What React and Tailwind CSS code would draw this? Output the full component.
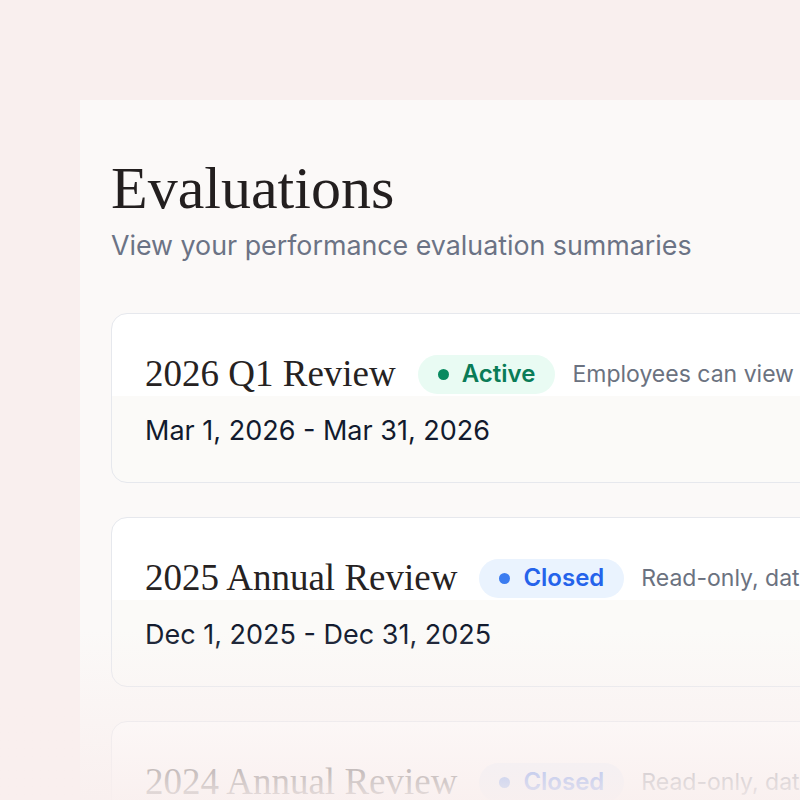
import React from 'react'

const evaluations = [
  {
    name: '2026 Q1 Review',
    status: 'Active',
    note: 'Employees can view results',
    range: 'Mar 1, 2026 - Mar 31, 2026',
  },
  {
    name: '2025 Annual Review',
    status: 'Closed',
    note: 'Read-only, data archived',
    range: 'Dec 1, 2025 - Dec 31, 2025',
  },
  {
    name: '2024 Annual Review',
    status: 'Closed',
    note: 'Read-only, data archived',
    range: 'Dec 1, 2024 - Dec 31, 2024',
  },
]

// ── Status pill
function StatusBadge({ status }) {
  const active = status === 'Active'
  return (
    <span
      className={`flex items-center gap-[13px] h-[39px] px-5 rounded-full text-[24px] font-semibold
        ${active ? 'bg-[#e9fbf3] text-[#0a7c57]' : 'bg-[#eaf3fe] text-[#2563eb]'}`}
    >
      <span className={`w-[11px] h-[11px] rounded-full ${active ? 'bg-[#0a8a60]' : 'bg-[#3b7cf0]'}`} />
      {status}
    </span>
  )
}

function EvaluationCard({ evaluation }) {
  return (
    <div className="rounded-[16px] border border-[#e6e8ed] bg-[linear-gradient(to_bottom,#ffffff_82px,#fbfaf8_82px)] pl-[33px] pt-[40px] pb-[35px]">
      <div className="flex items-center h-[40px] whitespace-nowrap">
        <h2 className="font-['Liberation_Serif',serif] text-[37px] leading-[40px] text-[#262222] mr-[22px]">
          {evaluation.name}
        </h2>
        <StatusBadge status={evaluation.status} />
        <span className="ml-[17px] text-[23px] text-[#6b7280]">{evaluation.note}</span>
      </div>
      <p className="mt-[21px] text-[27px] leading-[32px] text-[#121a2e] whitespace-nowrap">
        {evaluation.range}
      </p>
    </div>
  )
}

export default function App() {
  return (
    <div className="relative h-[800px] overflow-hidden bg-[#f9efee] pt-[100px] pl-[80px] font-['Inter',sans-serif]">
      <div className="w-[1000px] h-[800px] bg-[#fbf9f8] pl-[31px] pt-[58px]">
        <h1 className="font-['Liberation_Serif',serif] text-[60px] leading-[60px] text-[#231f1f]">
          Evaluations
        </h1>
        <p className="mt-[11px] text-[26.8px] leading-[32px] text-[#6b7385]">
          View your performance evaluation summaries
        </p>

        <div className="mt-[52px] flex flex-col gap-[34px]">
          {evaluations.map(ev => (
            <EvaluationCard key={ev.name} evaluation={ev} />
          ))}
        </div>
      </div>

      {/* bottom fade */}
      <div className="absolute inset-x-0 bottom-0 h-[170px] bg-gradient-to-b from-[#f9efee]/0 to-[#f9efee]/[0.92] pointer-events-none" />
    </div>
  )
}
